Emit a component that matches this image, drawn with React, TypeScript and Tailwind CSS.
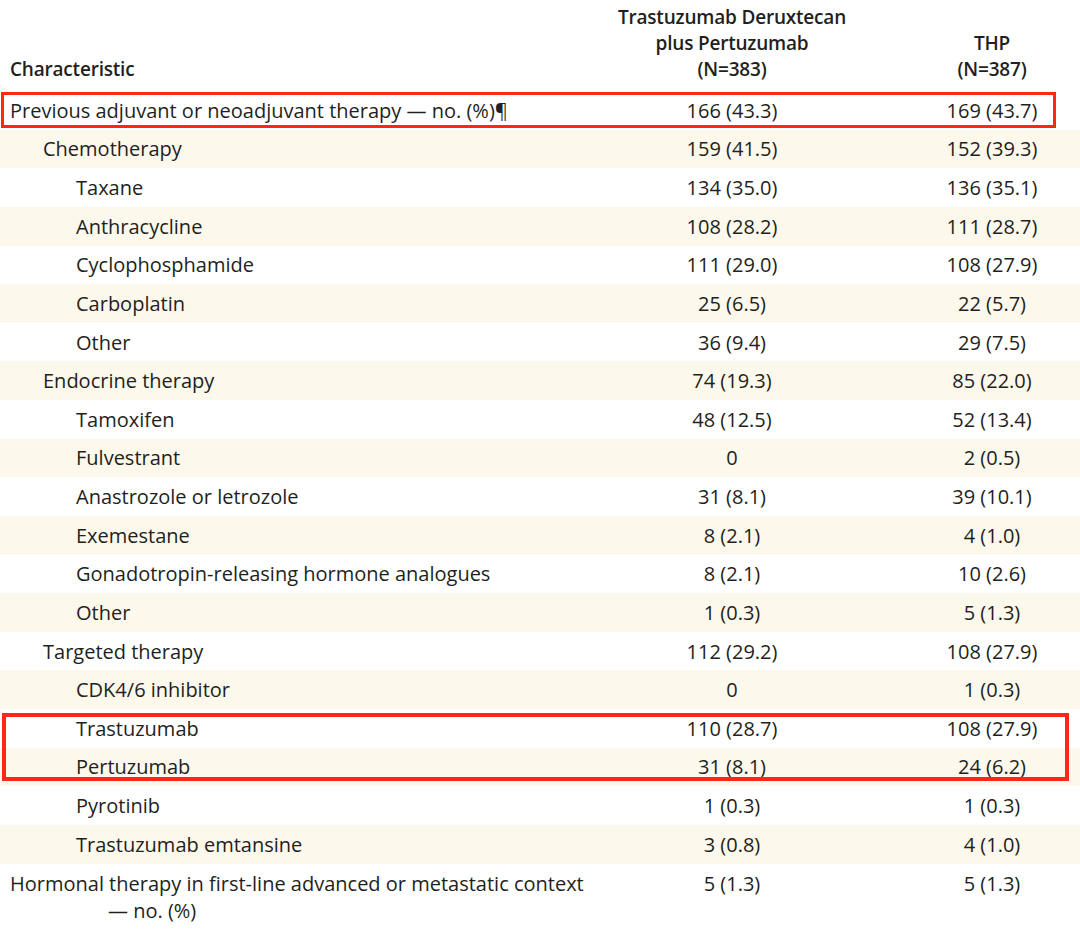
import React from 'react';

type Row = {
  label: string;
  level: 0 | 1 | 2;
  a: string;
  b: string;
};

const ROWS: Row[] = [
  { label: 'Previous adjuvant or neoadjuvant therapy — no. (%)¶', level: 0, a: '166 (43.3)', b: '169 (43.7)' },
  { label: 'Chemotherapy', level: 1, a: '159 (41.5)', b: '152 (39.3)' },
  { label: 'Taxane', level: 2, a: '134 (35.0)', b: '136 (35.1)' },
  { label: 'Anthracycline', level: 2, a: '108 (28.2)', b: '111 (28.7)' },
  { label: 'Cyclophosphamide', level: 2, a: '111 (29.0)', b: '108 (27.9)' },
  { label: 'Carboplatin', level: 2, a: '25 (6.5)', b: '22 (5.7)' },
  { label: 'Other', level: 2, a: '36 (9.4)', b: '29 (7.5)' },
  { label: 'Endocrine therapy', level: 1, a: '74 (19.3)', b: '85 (22.0)' },
  { label: 'Tamoxifen', level: 2, a: '48 (12.5)', b: '52 (13.4)' },
  { label: 'Fulvestrant', level: 2, a: '0', b: '2 (0.5)' },
  { label: 'Anastrozole or letrozole', level: 2, a: '31 (8.1)', b: '39 (10.1)' },
  { label: 'Exemestane', level: 2, a: '8 (2.1)', b: '4 (1.0)' },
  { label: 'Gonadotropin-releasing hormone analogues', level: 2, a: '8 (2.1)', b: '10 (2.6)' },
  { label: 'Other', level: 2, a: '1 (0.3)', b: '5 (1.3)' },
  { label: 'Targeted therapy', level: 1, a: '112 (29.2)', b: '108 (27.9)' },
  { label: 'CDK4/6 inhibitor', level: 2, a: '0', b: '1 (0.3)' },
  { label: 'Trastuzumab', level: 2, a: '110 (28.7)', b: '108 (27.9)' },
  { label: 'Pertuzumab', level: 2, a: '31 (8.1)', b: '24 (6.2)' },
  { label: 'Pyrotinib', level: 2, a: '1 (0.3)', b: '1 (0.3)' },
  { label: 'Trastuzumab emtansine', level: 2, a: '3 (0.8)', b: '4 (1.0)' },
];

const indent = ['pl-[10px]', 'pl-[43px]', 'pl-[76px]'];

const App: React.FC = () => {
  return (
    <div
      className="relative w-[1080px] h-[929px] bg-white text-[#231f20] overflow-hidden"
      style={{ fontFamily: '"Open Sans", "Noto Sans", sans-serif' }}
    >
      {/* Column headers */}
      <div className="grid grid-cols-[612px_240px_1fr] h-[91px] pt-[4px] pb-[9px] font-semibold text-[19px] leading-[26px] tracking-[-0.2px]">
        <div className="pl-[10px] flex items-end">Characteristic</div>
        <div className="text-center flex flex-col justify-end">
          <span>Trastuzumab Deruxtecan</span>
          <span>plus Pertuzumab</span>
          <span>(N=383)</span>
        </div>
        <div className="pl-[52px] text-center flex flex-col justify-end">
          <span>THP</span>
          <span>(N=387)</span>
        </div>
      </div>

      {/* Body rows */}
      <div className="text-[20px] leading-[27px]">
        {ROWS.map((r, i) => (
          <div
            key={i}
            className={`grid grid-cols-[612px_240px_1fr] h-[38.63px] items-center ${i % 2 === 1 ? 'bg-[#fcf8ec]' : 'bg-white'}`}
          >
            <div className={`${indent[r.level]} whitespace-nowrap`}>{r.label}</div>
            <div className="text-center">{r.a}</div>
            <div className="pl-[52px] text-center">{r.b}</div>
          </div>
        ))}
        <div className="grid grid-cols-[612px_240px_1fr] pt-[6px] bg-white">
          <div className="pl-[10px]">
            <div className="whitespace-nowrap">Hormonal therapy in first-line advanced or metastatic context</div>
            <div className="pl-[98px]">— no. (%)</div>
          </div>
          <div className="text-center">5 (1.3)</div>
          <div className="pl-[52px] text-center">5 (1.3)</div>
        </div>
      </div>

      {/* Red highlight boxes */}
      <div className="absolute left-[1px] top-[92px] w-[1055px] h-[36px] border-[3px] border-[#fc2912] pointer-events-none" />
      <div className="absolute left-[2px] top-[713px] w-[1067px] h-[68px] border-[4px] border-[#fc2912] pointer-events-none" />
    </div>
  );
};

export default App;
